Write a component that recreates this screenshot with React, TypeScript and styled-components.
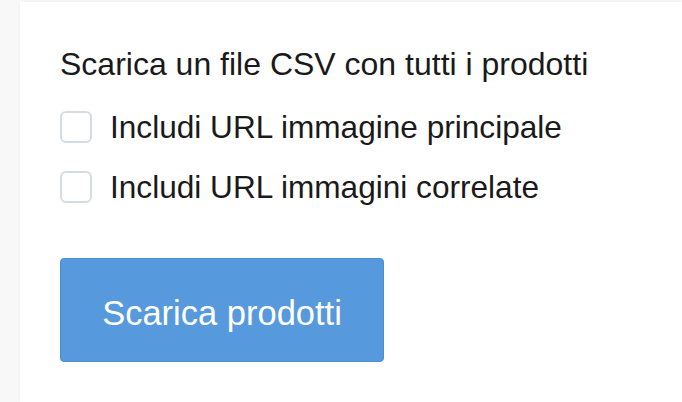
import styled, { createGlobalStyle } from 'styled-components';

const GlobalStyle = createGlobalStyle`
  html, body {
    margin: 0;
    background: #f8f8f8;
    font-family: "Liberation Sans", Arial, sans-serif;
  }
`;

const Page = styled.div`
  padding: 2px 0 0 20px;
  height: 402px;
  box-sizing: border-box;
`;

const Panel = styled.div`
  background: #ffffff;
  height: 100%;
  box-shadow: 0 0 4px rgba(0, 0, 0, 0.04);
  padding: 46px 40px 0;
  box-sizing: border-box;
  display: flex;
  flex-direction: column;
`;

const Heading = styled.p`
  margin: 0;
  font-size: 32px;
  line-height: 32px;
  color: #1a1a1a;
`;

const Options = styled.div`
  display: flex;
  flex-direction: column;
  gap: 28px;
  margin-top: 31px;
`;

const Option = styled.label`
  display: flex;
  align-items: center;
  gap: 18px;
  font-size: 31.6px;
  line-height: 32px;
  color: #1a1a1a;
`;

const Box = styled.span`
  width: 28px;
  height: 28px;
  border: 2px solid #d4dce4;
  border-radius: 6px;
  background: #fff;
  flex-shrink: 0;
`;

const Button = styled.button`
  margin-top: 55px;
  width: 324px;
  height: 104px;
  background: #5799dd;
  border: 1px solid #4a8fd2;
  border-radius: 4px;
  color: #ffffff;
  font-family: inherit;
  font-size: 34.5px;
  padding: 6px 0 0;
`;

const options = ['Includi URL immagine principale', 'Includi URL immagini correlate'];

function App() {
  return (
    <>
      <GlobalStyle />
      <Page>
        <Panel>
          <Heading>Scarica un file CSV con tutti i prodotti</Heading>
          <Options>
            {options.map((o) => (
              <Option key={o}>
                <Box />
                {o}
              </Option>
            ))}
          </Options>
          <div>
            <Button>Scarica prodotti</Button>
          </div>
        </Panel>
      </Page>
    </>
  );
}

export default App;
